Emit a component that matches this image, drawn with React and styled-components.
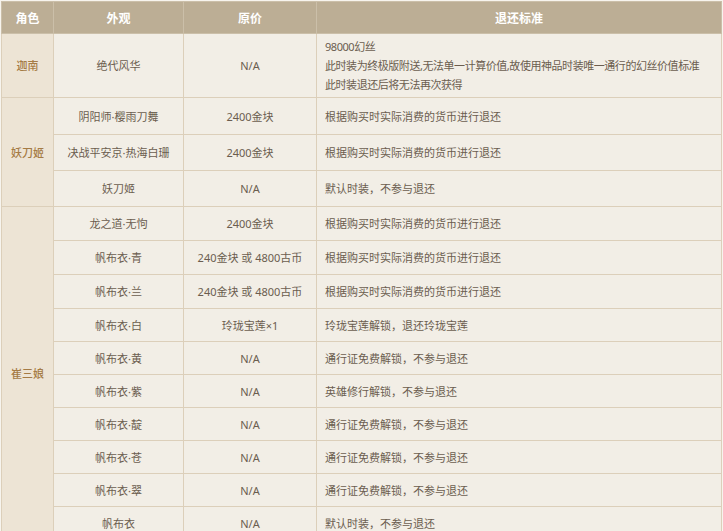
import React from "react";
import styled, { createGlobalStyle } from "styled-components";

const G = createGlobalStyle`
  html,body{margin:0;padding:0;background:#f7f4ee;}
  body{font-family:"Noto Sans","Noto Sans CJK SC",sans-serif;}
`;
const Wrap = styled.div`padding:1px 1px 4px 1px;`;
const Table = styled.table`
  width:721px;border-collapse:collapse;table-layout:fixed;font-size:11px;color:#6b5d4f;
  border:1px solid #d6c9b4;
`;
const Th = styled.th`
  background:#bcae95;color:#fff;font-weight:bold;font-size:12px;height:31px;
  border:1px solid #cbbfa9;padding:0;
`;
const Td = styled.td`
  background:#f2eee6;border:1px solid #dccfba;height:${p=>p.$h||31}px;padding:0 ${p=>p.$left?8:2}px;
  text-align:${p=>p.$left?"left":"center"};line-height:19px;white-space:nowrap;
  letter-spacing:${p=>p.$tight?"-0.45px":"0"};overflow:hidden;
`;
const Role = styled(Td)`
  background:#ede4d5;color:#a57b45;font-weight:500;padding:0;
`;

const rows = [
  ["龙之道·无怐","2400金块","根据购买时实际消费的货币进行退还"],
  ["帆布衣·青","240金块 或 4800古币","根据购买时实际消费的货币进行退还"],
  ["帆布衣·兰","240金块 或 4800古币","根据购买时实际消费的货币进行退还"],
  ["帆布衣·白","玲珑宝莲×1","玲珑宝莲解锁，退还玲珑宝莲"],
  ["帆布衣·黄","N/A","通行证免费解锁，不参与退还"],
  ["帆布衣·紫","N/A","英雄修行解锁，不参与退还"],
  ["帆布衣·靛","N/A","通行证免费解锁，不参与退还"],
  ["帆布衣·苍","N/A","通行证免费解锁，不参与退还"],
  ["帆布衣·翠","N/A","通行证免费解锁，不参与退还"],
  ["帆布衣","N/A","默认时装，不参与退还"],
];

export default function App(){
  return <Wrap><G/>
    <Table>
      <colgroup><col style={{width:52}}/><col style={{width:130}}/><col style={{width:133}}/><col/></colgroup>
      <thead><tr><Th>角色</Th><Th>外观</Th><Th>原价</Th><Th>退还标准</Th></tr></thead>
      <tbody>
        <tr><Role>迦南</Role><Td>绝代风华</Td><Td>N/A</Td>
          <Td $left $tight $h={63}>98000幻丝<br/>此时装为终极版附送,无法单一计算价值,故使用神品时装唯一通行的幻丝价值标准<br/>此时装退还后将无法再次获得</Td></tr>
        <tr><Role rowSpan={3}>妖刀姬</Role><Td $h={36}>阴阳师·樱雨刀舞</Td><Td>2400金块</Td><Td $left>根据购买时实际消费的货币进行退还</Td></tr>
        <tr><Td $h={35}>决战平安京·热海白珊</Td><Td>2400金块</Td><Td $left>根据购买时实际消费的货币进行退还</Td></tr>
        <tr><Td $h={35}>妖刀姬</Td><Td>N/A</Td><Td $left>默认时装，不参与退还</Td></tr>
        {rows.map((r,i)=><tr key={i}>
          {i===0 && <Role rowSpan={rows.length}>崔三娘</Role>}
          <Td $h={i<3?33:32}>{r[0]}</Td><Td>{r[1]}</Td><Td $left>{r[2]}</Td></tr>)}
      </tbody>
    </Table>
  </Wrap>;
}
